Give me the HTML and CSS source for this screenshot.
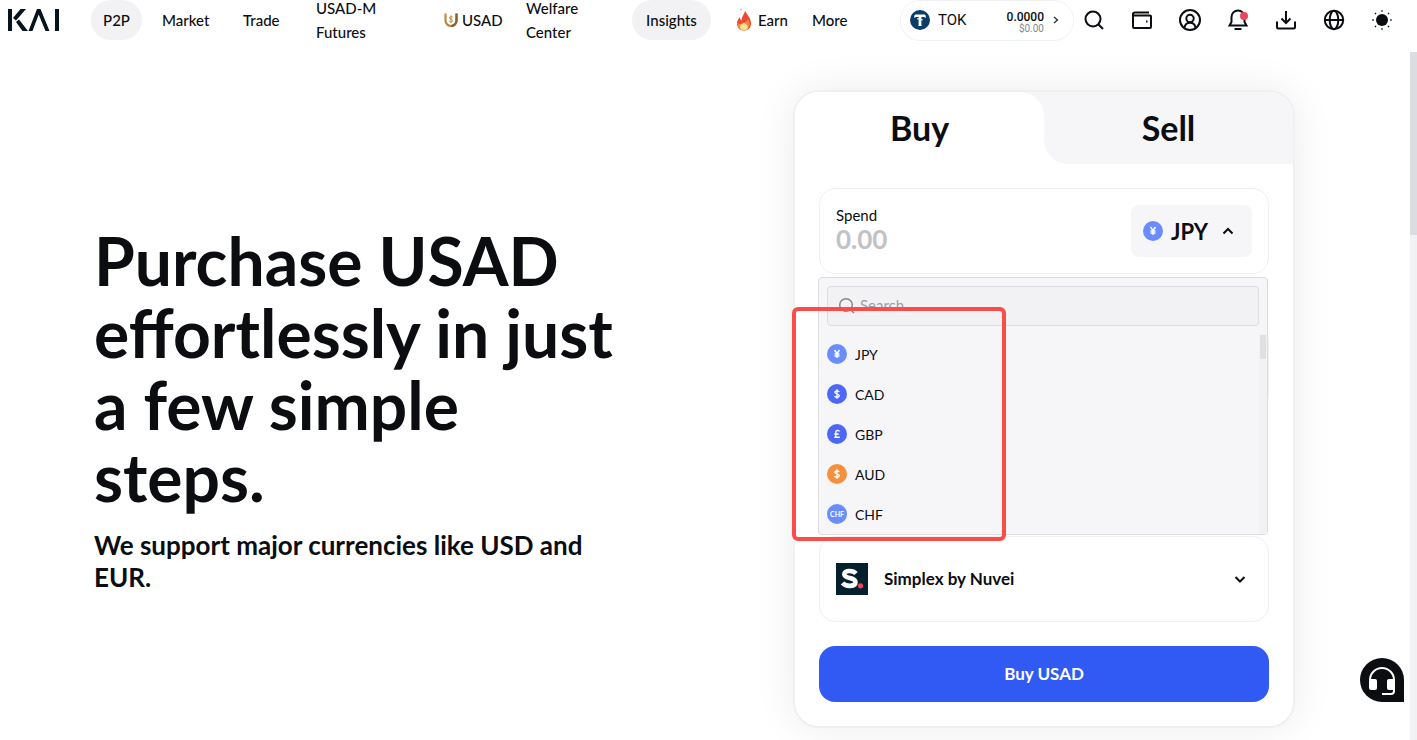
FILE: index.html
```html
<!-- index.html -->
<!DOCTYPE html>
<html lang="en">
<head>
    <meta charset="UTF-8">
    <meta name="viewport" content="width=device-width, initial-scale=1.0">
    <title>KAI - Buy USAD</title>
    <link rel="stylesheet" href="styles.css">
</head>
<body>
    <header class="topbar">
        <a class="logo" href="#" aria-label="KAI">
            <svg width="52" height="24" viewBox="0 0 52 24" fill="#04131f">
                <path d="M0 1h4v22H0z"/>
                <path d="M12.500 1H18L8 12.500L5 10z"/>
                <path d="M8 14L11 11.500L20 23H14.500z"/>
                <path d="M20.500 23L29 1H32.500L41.500 23H37.500L30.700 6.500L24.500 23z"/>
                <path d="M47 1h4v22h-4z"/>
            </svg>
        </a>

        <nav class="nav">
            <a class="pill" href="#">P2P</a>
            <a href="#">Market</a>
            <a href="#">Trade</a>
            <a class="wrap" href="#">USAD-M Futures</a>
            <a href="#">
                <svg width="14" height="15" viewBox="0 0 14 15" fill="none">
                    <path d="M1.500 0.500V7.500A5.500 5.500 0 0 0 12.500 7.500V0.500" stroke="#b98a4a" stroke-width="2.200"/>
                    <path d="M12.500 0.500V7.500A5.500 5.500 0 0 1 7 13" stroke="#8e6128" stroke-width="2.200"/>
                    <path d="M8.800 4.200C8 3.400 5.200 3.500 5.400 5C5.600 6.300 8.700 5.900 8.700 7.500C8.700 9 6 9 5.200 8.100M7 2.400V10" stroke="#b98a4a"/>
                </svg>
                USAD
            </a>
            <a class="wrap" href="#">Welfare Center</a>
            <a class="pill" href="#">Insights</a>
            <a class="earn" href="#">
                <svg width="16" height="22" viewBox="0 0 16 22">
                    <path d="M9 1.500C10 5 15 8 15 14.500C15 19 12 21.500 8 21.500C4 21.500 1 19 1 14.500C1 11.500 2.500 9.500 4 8C4 10 4.500 11 5.500 11.500C5.500 7.500 8.500 5.500 9 1.500z" fill="#ea4b34"/>
                    <path d="M12 10C14.500 13.500 14.500 21 8 21.300C3.500 21 1 18.500 1.600 13.500C2.500 15 4 15.500 5.500 14.500C9 14 10.500 12.500 12 10z" fill="#f58a3c"/>
                    <path d="M8 13.500C9 15 12 16 11.800 18.300C11.500 20.500 10 21.200 8 21.200C5.500 21.200 4 20 4 18C4 16 5.500 15.500 8 13.500z" fill="#fde38a"/>
                    <circle cx="5" cy="0.700" r="0.600" fill="#ea4b34"/>
                </svg>
                Earn
            </a>
            <a href="#">More</a>
        </nav>

        <div class="tools">
            <a class="balance" href="#">
                <svg width="20" height="20" viewBox="0 0 20 20">
                    <circle cx="10" cy="10" r="10" fill="#0b3c68"/>
                    <path d="M4.500 5.200L5.500 4.500H14.500L15.500 5.200L16 8L14 7H11.400V15.200L12 16H8L8.600 15.200V7H6L4 8z" fill="#fff"/>
                    <path d="M7.300 8.600L12.700 10" stroke="#fff" stroke-width="1.200"/>
                </svg>
                <span class="token">TOK</span>
                <span class="amounts">
                    <b>0.0000</b>
                    <small>$0.00</small>
                </span>
                <svg width="8" height="8" viewBox="0 0 8 8" fill="none" stroke="#303237" stroke-width="1.400"><path d="M2 1L5.500 4L2 7"/></svg>
            </a>
            <button aria-label="Search">
                <svg width="24" height="24" viewBox="0 0 24 24"><circle cx="11" cy="11" r="7.500"/><path d="M16.500 16.500L21 21"/></svg>
            </button>
            <button aria-label="Wallet">
                <svg width="24" height="24" viewBox="0 0 24 24"><path d="M19 4.500H5Q3 4.500 3 6Q3 7.500 5 7.500H20Q21 7.500 21 8.500V19Q21 20 20 20H4Q3 20 3 19V6"/><path d="M16 13.500h1.500"/></svg>
            </button>
            <button aria-label="Account">
                <svg width="24" height="24" viewBox="0 0 24 24"><circle cx="12" cy="12" r="10"/><circle cx="12" cy="10.500" r="3.700"/><path d="M6.500 19.500C7.500 13 16.500 13 17.500 19.500"/></svg>
            </button>
            <button aria-label="Notifications">
                <svg width="24" height="24" viewBox="0 0 24 24"><path d="M3.500 17.500H20.500L18.500 14V9A6.500 6.500 0 0 0 5.500 9V14z"/><path d="M8.500 21H15.500"/><circle class="dot" cx="18" cy="8" r="4"/></svg>
            </button>
            <button aria-label="Download">
                <svg width="24" height="24" viewBox="0 0 24 24"><path d="M3 13.500V19Q3 20.500 4.500 20.500H19.500Q21 20.500 21 19V13.500"/><path d="M12 3V15M7.500 10.500L12 15L16.500 10.500"/></svg>
            </button>
            <button aria-label="Language">
                <svg width="24" height="24" viewBox="0 0 24 24"><circle cx="12" cy="12" r="9.200"/><ellipse cx="12" cy="12" rx="4.300" ry="9.200"/><path d="M3 12H21"/></svg>
            </button>
            <button aria-label="Theme">
                <svg width="24" height="24" viewBox="0 0 24 24"><circle class="sun" cx="12" cy="12" r="6"/><path class="rays" d="M12 2.300V3.800M12 20.200V21.700M2.300 12H3.800M20.200 12H21.700M5 5L6 6M18 18L19 19M19 5L18 6M6 18L5 19"/></svg>
            </button>
        </div>
    </header>

    <main class="page">
        <section class="intro">
            <h1>Purchase USAD effortlessly in just a few simple steps.</h1>
            <p>We support major currencies like USD and EUR.</p>
        </section>

        <form class="card">
            <div class="tabs">
                <button type="button" class="tab active">Buy</button>
                <button type="button" class="tab">Sell</button>
            </div>

            <div class="card-body">
                <div class="box spend">
                    <div class="field">
                        <label for="amount">Spend</label>
                        <input type="text" id="amount" placeholder="0.00">
                    </div>
                    <button type="button" class="currency">
                        <svg class="coin" viewBox="0 0 20 20"><circle cx="10" cy="10" r="10" fill="#6b8cff"/><path d="M7.500 6L10 9.500L12.500 6M10 9.500V14M7.500 10H12.500M7.500 12H12.500"/></svg>
                        JPY
                        <svg class="caret" viewBox="0 0 12 12"><path d="M1.500 8.500L6 4L10.500 8.500"/></svg>
                    </button>

                    <div class="dropdown">
                        <div class="search">
                            <svg width="18" height="18" viewBox="0 0 18 18" fill="none" stroke="#85878c" stroke-width="1.500"><circle cx="8" cy="8" r="6.300"/><path d="M12.500 12.500L16 16"/></svg>
                            <input type="text" placeholder="Search" aria-label="Search currency">
                        </div>
                        <ul>
                            <li><svg class="coin" viewBox="0 0 20 20"><circle cx="10" cy="10" r="10" fill="#6b8cff"/><path d="M7.500 6L10 9.500L12.500 6M10 9.500V14M7.500 10H12.500M7.500 12H12.500"/></svg>JPY</li>
                            <li><svg class="coin" viewBox="0 0 20 20"><circle cx="10" cy="10" r="10" fill="#4d68f6"/><path d="M12.300 8C11.500 6.300 7.700 6.500 7.800 8.300C8 10.200 12.200 9.500 12.300 11.700C12.300 13.600 8.300 13.800 7.600 11.900M10 5.300V14.800"/></svg>CAD</li>
                            <li><svg class="coin" viewBox="0 0 20 20"><circle cx="10" cy="10" r="10" fill="#4d68f6"/><path d="M12.500 7.500C11.500 5.500 8.500 6.500 8.800 8.500V13.300M7.300 13.300H12.800M7.300 10H11.800"/></svg>GBP</li>
                            <li><svg class="coin" viewBox="0 0 20 20"><circle cx="10" cy="10" r="10" fill="#f5913e"/><path d="M12.300 8C11.500 6.300 7.700 6.500 7.800 8.300C8 10.200 12.200 9.500 12.300 11.700C12.300 13.600 8.300 13.800 7.600 11.900M10 5.300V14.800"/></svg>AUD</li>
                            <li><svg class="coin" viewBox="0 0 20 20"><circle cx="10" cy="10" r="10" fill="#6b8cff"/><text x="10" y="12.500" text-anchor="middle">CHF</text></svg>CHF</li>
                        </ul>
                        <div class="highlight"></div>
                    </div>
                </div>

                <div class="box receive"></div>

                <button type="button" class="box provider">
                    <svg width="32" height="32" viewBox="0 0 32 32">
                        <rect width="32" height="32" fill="#04202f"/>
                        <path d="M20 10.500C17 7 8 7 8.300 11.300C8.600 16 19.500 14 19.500 19C19.500 24 10 24 6.500 20" fill="none" stroke="#fff" stroke-width="4.600"/>
                        <circle cx="24.500" cy="22.800" r="2.600" fill="#f0455f"/>
                    </svg>
                    <span>Simplex by Nuvei</span>
                    <svg class="caret" viewBox="0 0 12 12"><path d="M1.500 4L6 8.500L10.500 4"/></svg>
                </button>

                <button type="submit" class="buy">Buy USAD</button>
            </div>
        </form>
    </main>

    <div class="scrollbar"><div class="thumb"></div></div>

    <button class="support" aria-label="Support">
        <svg width="44" height="44" viewBox="0 0 44 44">
            <path d="M10 22A12 12 0 0 1 34 22V33Q34 36 31 36H22" fill="none" stroke="#fff" stroke-width="2"/>
            <rect x="9" y="21" width="8" height="11" rx="2" fill="#fff"/>
            <rect x="27" y="21" width="8" height="11" rx="2" fill="#fff"/>
        </svg>
    </button>
</body>
</html>
```
FILE: styles.css
```css
* {
    box-sizing: border-box;
}
body {
    margin: 0;
    font-family: Lato, "Open Sans", sans-serif;
    font-size: 15px;
    color: #0b0d11;
    background: #fff;
}
button, input {
    font: inherit;
    color: inherit;
    border: none;
    background: none;
    padding: 0;
}
button {
    cursor: pointer;
}
a {
    color: inherit;
    text-decoration: none;
}

/* top bar */
.topbar {
    display: flex;
    align-items: center;
    height: 40px;
    padding: 0 23px 0 8px;
}
.logo {
    width: 83px;
}
.logo svg {
    display: block;
}
.nav {
    display: grid;
    grid-template-columns: 51px 81px 73px 128px 82px 126px 79px 81px 60px;
    align-items: center;
    font-weight: 500;
    line-height: 24px;
}
.nav a {
    display: flex;
    align-items: center;
    gap: 4px;
    padding-left: 20px;
    white-space: nowrap;
}
.nav .wrap {
    display: block;
    width: 92px;
    white-space: normal;
}
.nav .pill {
    justify-content: center;
    height: 40px;
    padding: 0;
    border-radius: 20px;
    background: #f2f2f4;
}
.nav .earn {
    padding-left: 25px;
    gap: 6px;
}
.tools {
    display: flex;
    align-items: center;
    gap: 24px;
    margin-left: auto;
}
.tools button {
    width: 24px;
    height: 24px;
}
.tools button svg {
    display: block;
    fill: none;
    stroke: #0b0d11;
    stroke-width: 2;
}
.tools .dot {
    fill: #f0465c;
    stroke: none;
}
.tools .sun {
    fill: #0b0d11;
    stroke: none;
}
.tools .rays {
    stroke-width: 1.4;
}
.balance {
    display: flex;
    align-items: center;
    gap: 8px;
    width: 174px;
    height: 41px;
    margin-right: -16px;
    padding: 0 13px 0 9px;
    border: 1px solid #f2f2f4;
    border-radius: 20px;
    font-family: Roboto, sans-serif;
}
.amounts {
    margin-left: auto;
    padding-top: 5px;
    text-align: right;
}
.amounts b {
    display: block;
    font-size: 12px;
    line-height: 12px;
    font-weight: 500;
}
.amounts small {
    display: block;
    font-size: 10px;
    line-height: 12px;
    color: #85878c;
}

/* content */
.page {
    display: flex;
    align-items: center;
    justify-content: space-between;
    padding: 50px 122px 13px 94px;
}
.intro {
    width: 530px;
}
h1 {
    margin: 0 0 16px;
    font-size: 66px;
    line-height: 72px;
    font-weight: 700;
}
.intro p {
    margin: 0;
    font-size: 26px;
    line-height: 32px;
    font-weight: 700;
}

/* buy and sell card */
.card {
    width: 502px;
    border: 2px solid #f0f0f1;
    border-radius: 26px;
    background: #fff;
    box-shadow: 0 0 40px rgba(0, 0, 0, 0.08);
}
.tabs {
    display: flex;
    border-radius: 24px 24px 0 0;
    overflow: hidden;
    background: linear-gradient(#f6f6f9, #f6f6f9) center top / 60px 36px no-repeat;
}
.tab {
    flex: 1;
    height: 72px;
    padding-bottom: 2px;
    font-size: 34px;
    font-weight: 700;
    background: #f6f6f9;
    border-radius: 0 0 0 24px;
}
.tab.active {
    background: #fff;
    border-radius: 0 24px 0 0;
}
.card-body {
    padding: 24px;
}
.box {
    width: 100%;
    height: 86px;
    border: 1px solid #f0f0f1;
    border-radius: 16px;
}
.spend {
    position: relative;
    display: flex;
    align-items: center;
    justify-content: space-between;
    padding: 0 16px;
}
.field label {
    display: block;
    line-height: 20px;
}
.field input {
    display: block;
    width: 200px;
    height: 32px;
    padding-bottom: 4px;
    font-size: 26px;
    font-weight: 700;
}
.field input::placeholder {
    color: #c2c2c6;
}
.currency {
    display: flex;
    align-items: center;
    gap: 8px;
    width: 121px;
    height: 52px;
    padding-left: 12px;
    border-radius: 8px;
    background: #f6f6f9;
    font-size: 22px;
    font-weight: 700;
}
.coin {
    width: 20px;
    height: 20px;
    fill: none;
    stroke: #fff;
    stroke-width: 1.4;
}
.coin circle {
    stroke: none;
}
.coin text {
    font-size: 7px;
    font-weight: 700;
    fill: #fff;
    stroke: none;
}
.caret {
    width: 12px;
    height: 12px;
    fill: none;
    stroke: #0b0d11;
    stroke-width: 2;
}
.currency .caret {
    margin-left: 6px;
}
.receive {
    margin: 51px 0 125px;
}
.provider {
    display: flex;
    align-items: center;
    gap: 16px;
    padding: 0 22px 0 16px;
    font-size: 17px;
    font-weight: 700;
}
.provider span {
    padding-bottom: 2px;
}
.provider .caret {
    margin-left: auto;
}
.buy {
    width: 100%;
    height: 56px;
    margin-top: 24px;
    padding-bottom: 2px;
    border-radius: 16px;
    background: #305af3;
    color: #fff;
    font-size: 17px;
    font-weight: 700;
}

/* currency list */
.dropdown {
    position: absolute;
    top: 88px;
    left: -2px;
    z-index: 1;
    width: 450px;
    height: 258px;
    padding: 8px;
    border: 1px solid #dcdde0;
    border-radius: 4px;
    background: #f6f6f9;
}
.search {
    display: flex;
    align-items: center;
    gap: 4px;
    height: 40px;
    padding: 0 10px;
    border: 1px solid #dcdde0;
    border-radius: 4px;
    background: #f2f2f4;
}
.search input {
    flex: 1;
    padding-bottom: 2px;
}
.search input::placeholder {
    color: #9a9fae;
}
.dropdown ul {
    margin: 8px -8px 0 0;
    padding: 0;
    list-style: none;
    background: linear-gradient(#dfe0e2, #dfe0e2) right 1px top 1px / 6px 24px no-repeat,
        linear-gradient(#f2f2f4, #f2f2f4) right / 8px 100% no-repeat;
}
.dropdown li {
    display: flex;
    align-items: center;
    gap: 8px;
    height: 40px;
    font-size: 14px;
}
.highlight {
    position: absolute;
    top: 29px;
    left: -27px;
    width: 214px;
    height: 234px;
    border: 4px solid #fa4d4a;
    border-radius: 6px;
}

/* page scrollbar and support bubble */
.scrollbar {
    position: fixed;
    top: 52px;
    right: 0;
    bottom: 0;
    width: 7px;
    background: #f2f2f4;
}
.thumb {
    height: 183px;
    background: #dcdde0;
}
.support {
    position: fixed;
    right: 13px;
    bottom: 38px;
    width: 44px;
    height: 44px;
    border-radius: 22px 22px 0 22px;
    background: #0b0d11;
}
```
